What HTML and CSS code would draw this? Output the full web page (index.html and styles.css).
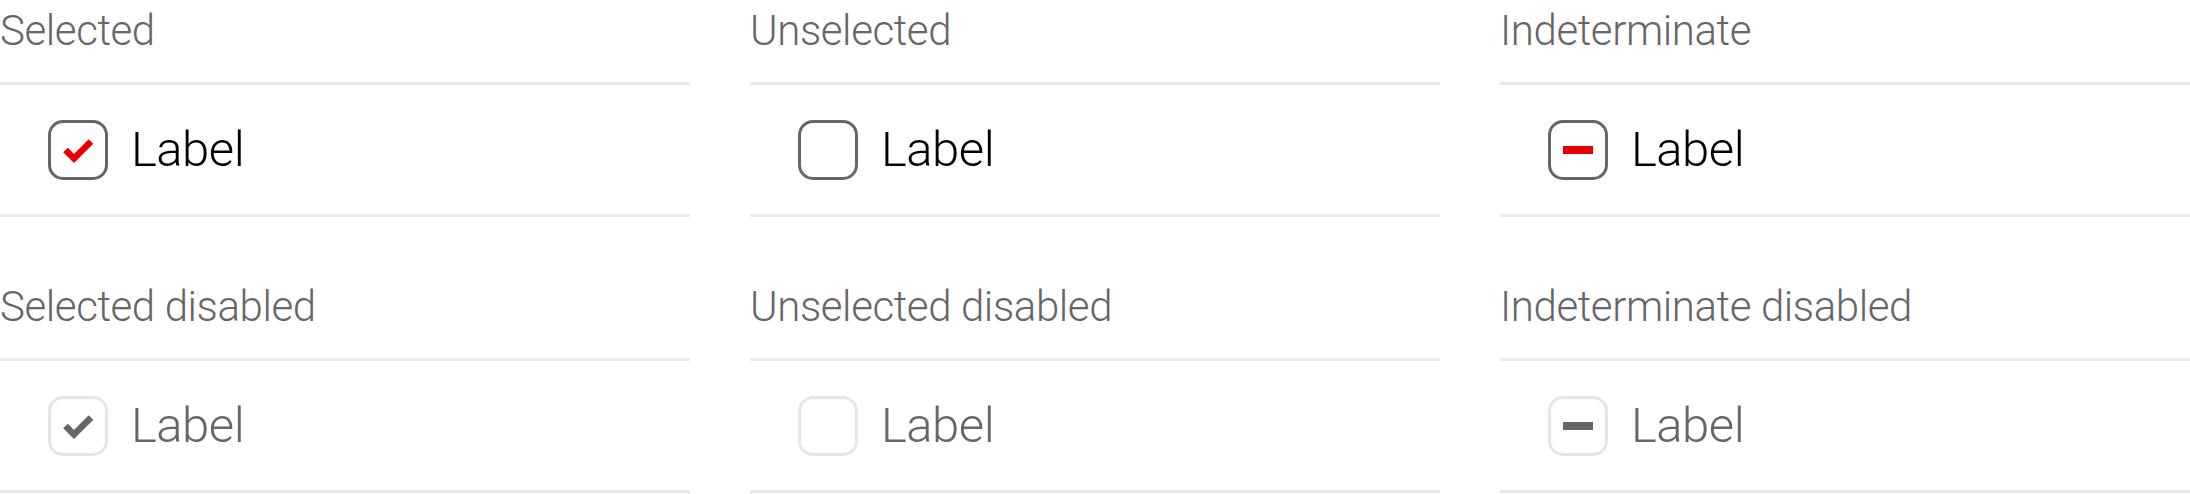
FILE: index.html
```html
<!DOCTYPE html>
<html>
<head>
<meta charset="utf-8">
<link rel="stylesheet" href="styles.css">
</head>
<body>
<div class="grid">
  <section class="cell">
    <div class="heading">Selected</div>
    <div class="row">
      <span class="box"><svg viewBox="0 0 60 60" class="mark"><polyline points="17.5,30 26,38.5 43,21.5" class="check red"/></svg></span>
      <span class="label">Label</span>
    </div>
  </section>
  <section class="cell">
    <div class="heading">Unselected</div>
    <div class="row">
      <span class="box"></span>
      <span class="label">Label</span>
    </div>
  </section>
  <section class="cell">
    <div class="heading">Indeterminate</div>
    <div class="row">
      <span class="box"><svg viewBox="0 0 60 60" class="mark"><rect x="15" y="26" width="30" height="8" class="dash red"/></svg></span>
      <span class="label">Label</span>
    </div>
  </section>
  <section class="cell disabled">
    <div class="heading">Selected disabled</div>
    <div class="row">
      <span class="box"><svg viewBox="0 0 60 60" class="mark"><polyline points="17.5,30 26,38.5 43,21.5" class="check gray"/></svg></span>
      <span class="label">Label</span>
    </div>
  </section>
  <section class="cell disabled">
    <div class="heading">Unselected disabled</div>
    <div class="row">
      <span class="box"></span>
      <span class="label">Label</span>
    </div>
  </section>
  <section class="cell disabled">
    <div class="heading">Indeterminate disabled</div>
    <div class="row">
      <span class="box"><svg viewBox="0 0 60 60" class="mark"><rect x="15" y="26" width="30" height="8" class="dash gray"/></svg></span>
      <span class="label">Label</span>
    </div>
  </section>
</div>
</body>
</html>
```

FILE: styles.css
```css
html, body {
  margin: 0;
  padding: 0;
  background: #ffffff;
}
body {
  font-family: Roboto, "Liberation Sans", sans-serif;
  font-weight: 300;
}
.grid {
  display: grid;
  grid-template-columns: 690px 690px 690px;
  column-gap: 60px;
  row-gap: 59px;
}
.heading {
  height: 82px;
  box-sizing: border-box;
  padding-top: 10px;
  font-size: 42px;
  line-height: 42px;
  letter-spacing: -0.4px;
  color: #666666;
  white-space: nowrap;
}
.row {
  height: 135px;
  box-sizing: border-box;
  border-top: 3px solid #e8e8e8;
  border-bottom: 3px solid #e8e8e8;
  display: flex;
  align-items: center;
  padding-left: 48px;
  gap: 23px;
}
.box {
  width: 60px;
  height: 60px;
  box-sizing: border-box;
  border: 3px solid #666666;
  border-radius: 15px;
  position: relative;
  flex: none;
}
.disabled .box {
  border-color: #e6e6e6;
}
.mark {
  position: absolute;
  left: -3px;
  top: -3px;
  width: 60px;
  height: 60px;
}
.check {
  fill: none;
  stroke-width: 6.5;
  stroke-linejoin: miter;
  stroke-linecap: butt;
}
.check.red { stroke: #e60000; }
.check.gray { stroke: #666666; }
.dash.red { fill: #e60000; }
.dash.gray { fill: #666666; }
.label {
  font-size: 49px;
  line-height: 49px;
  letter-spacing: -0.5px;
  color: #000000;
}
.disabled .label {
  color: #666666;
}
```
